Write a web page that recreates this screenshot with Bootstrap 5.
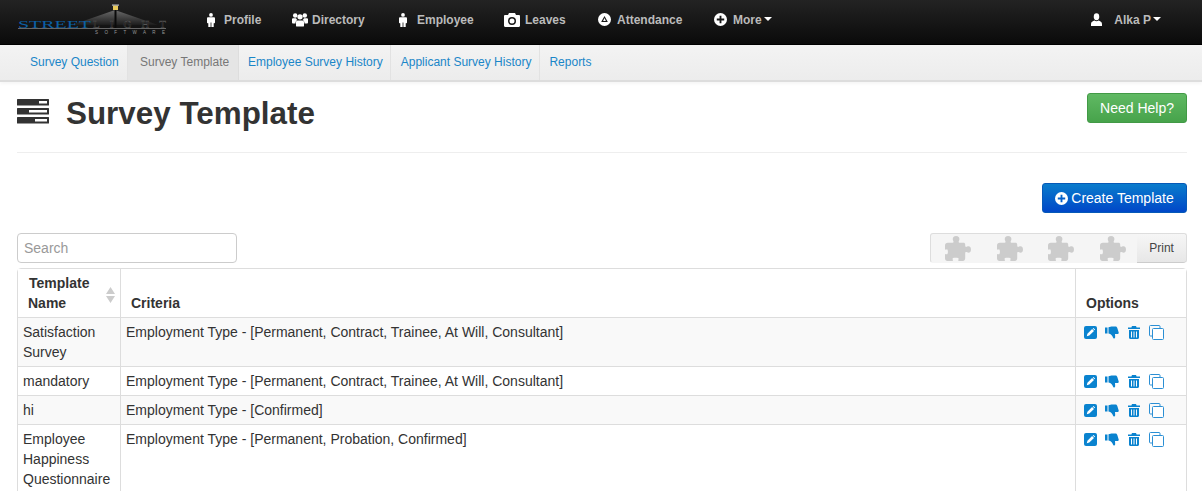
<!DOCTYPE html>
<html lang="en">
<head>
<meta charset="utf-8">
<title>Survey Template</title>
<link href="https://cdn.jsdelivr.net/npm/bootstrap@5.3.0/dist/css/bootstrap.min.css" rel="stylesheet">
<style>
html,body{height:491px;overflow:hidden}
body{font-family:"Liberation Sans",Arial,sans-serif;font-size:14px;line-height:20px;color:#333;background:#fff}
.topbar{height:45px;background:linear-gradient(#232323,#0a0a0a);padding:0;flex-wrap:nowrap;border-bottom:1px solid #000}
.brandbox{width:180px;height:44px;flex:none;display:block}
.mainnav .nav-link{color:#bbb;font-weight:700;font-size:12px;padding:0;height:39px;display:flex;align-items:center;white-space:nowrap}
.navitem{display:flex}
.navicon{fill:#fff;flex:none;display:block}
.w-profile{margin-left:26px;width:86px}
.w-directory{width:106px}
.w-employee{width:106px}
.w-leaves{width:94px}
.w-attendance{width:116px}
.w-more{width:100px}
.gap-man-a{margin-right:8px}
.gap-man-b{margin-right:9px}
.gap-group{margin-right:4px}
.gap-cam{margin-right:5px}
.gap-circle{margin-right:6px}
.gap-user{margin-right:12px}
.caret-down{display:inline-block;border-top:4px solid #fff;border-left:4px solid transparent;border-right:4px solid transparent;margin-left:2px;margin-top:-2px}
.usernav{margin-left:auto;margin-right:41px;color:#bbb;font-weight:700;font-size:12px;height:39px;display:flex;align-items:center}
.subbar{height:37px;background:linear-gradient(#f3f3f3,#ececec);border-bottom:2px solid #ddd;display:flex;box-shadow:0 2px 3px rgba(0,0,0,.04)}
.subbar a{font-size:12px;color:#1a86c8;text-decoration:none;display:flex;align-items:center;height:35px;padding-bottom:2px;white-space:nowrap}
.subbar a.tab-question{width:127px;padding-left:30px}
.subbar a.tab-template{width:112px;padding-left:12px;background:#e5e5e5;color:#777;border-left:1px solid #e2e2e2;border-right:1px solid #ddd}
.subbar a.tab-employee{padding-left:9px;padding-right:7px;border-right:1px solid #e2e2e2}
.subbar a.tab-applicant{padding-left:10px;padding-right:8px;border-right:1px solid #e2e2e2}
.subbar a.tab-reports{padding-left:9px}
.pagewrap{padding:0 15px 0 17px}
.headrow{height:71px;border-bottom:1px solid #eee}
.headtitle{display:flex;align-items:center;padding-top:20px;height:44px;margin:0}
.headtitle svg{margin-bottom:5px}
.headtitle h1{font-size:31.4px;line-height:40px;font-weight:700;margin:0 0 0 17px;color:#333}
.helpbtn{width:100px;height:30px;font-size:14px;line-height:28px;padding:0;color:#fff;background:linear-gradient(#60b963,#47a34b);border:1px solid #429a46;border-radius:3px;margin-top:11px}
.createrow{margin-top:30px;height:30px}
.createbtn{width:145px;height:30px;padding:0;font-size:14px;line-height:28px;color:#fff;background:linear-gradient(#0a7ccc,#0047c8);border:1px solid #0659b8;border-radius:3px;display:flex;align-items:center;justify-content:center;gap:3px}
.toolrow{margin-top:20px;height:30px}
.searchbox{width:220px;height:30px;font-size:14px;padding:4px 6px;border:1px solid #ccc;border-radius:4px;color:#555;line-height:20px}
.searchbox::placeholder{color:#999;opacity:1}
.toolgroup{width:257px;height:30px;display:flex;border:1px solid #ddd;border-radius:3px;background:#f5f5f5;border-bottom-color:#f5f5f5}
.puzzles{width:207px;display:flex;padding-left:14px;gap:25.6px;align-items:center}
.printbtn{width:49px;height:29px;font-size:12px;color:#444;background:linear-gradient(#f6f6f6,#e7e7e7);border:0;border-bottom:1px solid #ccc;padding:0;border-radius:0 3px 3px 0}
.gridwrap{margin-top:5px;width:1170px;border:1px solid #ddd;border-radius:4px 4px 0 0}
.gridtable{table-layout:fixed;width:100%;margin:0;font-size:14px;color:#333;--bs-table-border-color:#ddd;border-collapse:separate;border-spacing:0}
.gridtable th,.gridtable td{border:0;border-right:1px solid #ddd;border-bottom:1px solid #ddd;line-height:20px;box-shadow:none}
.gridtable th:last-child,.gridtable td:last-child{border-right:0}
.gridtable th{font-weight:700;padding:4px 10px 4px;vertical-align:bottom;height:49px;background:#fff}
.gridtable td{padding:4px 5px;vertical-align:top;color:#333}
.gridtable tbody tr:nth-child(odd) td{background:#f9f9f9}
.gridtable tbody tr:nth-child(even) td{background:#fff}
.sorthead{position:relative;padding-right:14px;display:block;margin-left:1px}
.sorthead-name{margin-left:-1px}
.sortmark{position:absolute;right:-5px;top:14px}
.opts{display:flex;align-items:center;padding-left:3px;height:20px}
.opts svg{display:block;flex:none}
.opt-down{margin-left:8px}
.opt-bin{margin-left:9px}
.opt-copy{margin-left:9px}
</style>
</head>
<body>
<svg width="0" height="0" class="position-absolute">
<symbol id="man" viewBox="0 0 10 14"><circle cx="5" cy="1.900" r="1.900"/><path d="M2.200 4.300h5.600c.8 0 1.200.5 1.200 1.200v3.900c0 .5-.3.800-.7.800h-.6V14H5.400V9.500h-.8V14H2.300V10.200h-.6c-.4 0-.7-.3-.7-.8V5.500c0-.7.400-1.200 1.200-1.200z"/></symbol>
<symbol id="group" viewBox="0 0 18 16"><circle cx="3.600" cy="3.500" r="2.500"/><circle cx="14.400" cy="3.500" r="2.500"/><circle cx="9" cy="5" r="3"/><path d="M0 7.500c0-.8.700-1 1.500-1h3c.4 1 1 1.600 1.600 2.200C4.700 9.300 4 10.400 4 12v.5H1c-.6 0-1-.4-1-1zM18 7.500c0-.8-.7-1-1.500-1h-3c-.4 1-1 1.600-1.600 2.200 1.400.6 2.100 1.700 2.100 3.300v.5h3c.6 0 1-.4 1-1zM6.500 9h5c1.100 0 2 .8 2 2v4c0 .6-.4 1-1 1h-7c-.6 0-1-.4-1-1v-4c0-1.200.9-2 2-2z"/></symbol>
<symbol id="cam" viewBox="0 0 16 14"><path fill-rule="evenodd" d="M1.200 2H4l1-2h6l1 2h2.800c.7 0 1.200.5 1.200 1.200v9.600c0 .7-.5 1.200-1.200 1.200H1.200C.5 14 0 13.500 0 12.800V3.200C0 2.500.5 2 1.200 2zM8 4a4 4 0 1 0 0 8 4 4 0 0 0 0-8zm0 1.500a2.500 2.500 0 1 1 0 5 2.500 2.500 0 0 1 0-5z"/></symbol>
<symbol id="att" viewBox="0 0 14 14"><path fill-rule="evenodd" d="M7 0a7 7 0 1 1 0 14A7 7 0 0 1 7 0zm0 3.200L3.400 9.800h7.200zm0 2.300l1.500 3H5.500z"/></symbol>
<symbol id="plus" viewBox="0 0 14 14"><path fill-rule="evenodd" d="M7 0a7 7 0 1 1 0 14A7 7 0 0 1 7 0zM6 3v3H3v2h3v3h2V8h3V6H8V3z"/></symbol>
<symbol id="user" viewBox="0 0 12 14"><ellipse cx="6" cy="4" rx="3" ry="3.700"/><path d="M0 14v-2.200C0 9.800 2 9 3.800 8.200c.6.500 1.300.8 2.200.8s1.600-.3 2.200-.8C10 9 12 9.800 12 11.800V14z"/></symbol>
<symbol id="puz" viewBox="0 0 27 26"><path d="M3 7H8C9 7 9 6 8.500 5 7.500 3 8 0 11.500 0S15.500 3 14.500 5C14 6 14 7 15 7H19C20.300 7 21 7.700 21 9V10.500C21 11.500 22 11.500 23 11 25 10 27 11 27 14S25 18 23 17C22 16.500 21 16.500 21 17.500V23C21 25 20 26 18.500 26H14.500C13.500 26 13.500 25 14 24.500 14.800 23.500 14 22.500 11 22.500S7.200 23.500 8 24.500C8.500 25 8.500 26 7.500 26H2.500C1 26 0 25 0 23.500V19.500C0 18.500 1 18.500 1.500 19 2.500 19.500 3 18.500 3 16.500S2.500 13.500 1.500 14C1 14.500 0 14.500 0 13.500V10C0 8 1 7 3 7z"/></symbol>
<symbol id="edit" viewBox="0 0 13 13"><rect width="13" height="13" rx="2" fill="#0a83cf"/><path d="M2.800 10.200l.6-2.500 4.700-4.700 1.900 1.900-4.700 4.700zM8.700 2.500l.7-.6 1.700 1.700-.7.700z" fill="#fff"/></symbol>
<symbol id="down" viewBox="0 0 14 13"><path d="M0 1.500h2.500v6H0zM3.500 1.300C5 .7 6 .5 7.500.5h3c1 0 1.500.6 1.800 1.500l1.400 4.500c.2.900-.3 1.500-1.200 1.500H10l.2 3c0 .9-.5 1.500-1.200 1.500-.5 0-.8-.3-1-.9C7.400 9.800 6 8 3.500 7.500z" fill="#0a83cf"/></symbol>
<symbol id="bin" viewBox="0 0 12 13"><path fill-rule="evenodd" d="M4 0h4l.6 1.500H12V3H0V1.500h3.400zM1 4h10v7.500c0 .9-.6 1.500-1.500 1.500h-7C1.600 13 1 12.400 1 11.500zm2 1.500v6h1v-6zm2.500 0v6h1v-6zm2.500 0v6h1v-6z" fill="#0a83cf"/></symbol>
<symbol id="copy" viewBox="0 0 15 15"><rect x=".5" y=".5" width="10.500" height="10.500" rx="1" fill="none" stroke="#2b8fd4"/><rect x="3.500" y="3.500" width="11" height="11" rx="1" fill="#fff" stroke="#2b8fd4"/></symbol>
</svg>

<nav class="navbar topbar d-flex align-items-start">
  <svg class="brandbox" viewBox="0 0 180 44" role="img" aria-label="StreetLight Software">
    <defs>
      <linearGradient id="beam" x1="0" y1="0" x2="0" y2="1"><stop offset="0" stop-color="#6a6a6a"/><stop offset="1" stop-color="#1c1c1c"/></linearGradient>
    </defs>
    <path d="M115 10L72 25h86z" fill="url(#beam)"/>
    <rect x="114.500" y="8" width="2" height="20" fill="#0a0a0a"/>
    <rect x="113" y="5.500" width="5" height="4.500" fill="#e8c95a"/>
    <rect x="112" y="4.500" width="7" height="1.200" fill="#bbb"/>
    <text x="18" y="28" font-family="Liberation Serif,serif" font-size="11" textLength="73" lengthAdjust="spacingAndGlyphs" fill="#0b5fa5">STREET</text>
    <text x="93" y="28" font-family="Liberation Serif,serif" font-size="11" textLength="73" lengthAdjust="spacing" fill="#0c0c0c" stroke="#555" stroke-width=".4">LIGHT</text>
    <rect x="18" y="28" width="148" height="1" fill="#666"/>
    <text x="95" y="33.500" font-family="Liberation Sans,sans-serif" font-size="4.500" textLength="70" lengthAdjust="spacing" fill="#999">SOFTWARE</text>
  </svg>
  <div class="mainnav d-flex">
    <div class="navitem w-profile"><a class="nav-link" href="#"><svg class="navicon gap-man-a" width="10" height="14"><use href="#man"/></svg>Profile</a></div>
    <div class="navitem w-directory"><a class="nav-link" href="#"><svg class="navicon gap-group" width="16" height="15"><use href="#group"/></svg>Directory</a></div>
    <div class="navitem w-employee"><a class="nav-link" href="#"><svg class="navicon gap-man-b" width="10" height="14"><use href="#man"/></svg>Employee</a></div>
    <div class="navitem w-leaves"><a class="nav-link" href="#"><svg class="navicon gap-cam" width="16" height="14"><use href="#cam"/></svg>Leaves</a></div>
    <div class="navitem w-attendance"><a class="nav-link" href="#"><svg class="navicon gap-circle" width="13" height="13"><use href="#att"/></svg>Attendance</a></div>
    <div class="navitem w-more"><a class="nav-link" href="#"><svg class="navicon gap-circle" width="13" height="13"><use href="#plus"/></svg>More<span class="caret-down"></span></a></div>
  </div>
  <div class="usernav"><svg class="navicon gap-user" width="11" height="13"><use href="#user"/></svg>Alka P<span class="caret-down"></span></div>
</nav>

<div class="subbar">
  <a class="tab-question" href="#">Survey Question</a>
  <a class="tab-template" href="#">Survey Template</a>
  <a class="tab-employee" href="#">Employee Survey History</a>
  <a class="tab-applicant" href="#">Applicant Survey History</a>
  <a class="tab-reports" href="#">Reports</a>
</div>

<div class="pagewrap">
  <div class="headrow d-flex justify-content-between align-items-start">
    <div class="headtitle">
      <svg width="32" height="25" viewBox="0 0 32 25" fill="#333"><rect width="32" height="6.500" rx=".5"/><rect y="9" width="32" height="6.500" rx=".5"/><rect y="18" width="32" height="6.500" rx=".5"/><rect x="22" y="2" width="8" height="2.500" fill="#fff"/><rect x="12" y="11" width="18" height="2.500" fill="#fff"/><rect x="18" y="20" width="12" height="2.500" fill="#fff"/></svg>
      <h1>Survey Template</h1>
    </div>
    <button class="btn helpbtn" type="button">Need Help?</button>
  </div>
  <div class="createrow d-flex justify-content-end">
    <button class="btn createbtn" type="button"><svg width="13" height="13" fill="#fff"><use href="#plus"/></svg>Create Template</button>
  </div>
  <div class="toolrow d-flex justify-content-between">
    <input class="form-control searchbox" type="text" placeholder="Search">
    <div class="toolgroup">
      <div class="puzzles">
        <svg width="26" height="25" fill="#ccc"><use href="#puz"/></svg>
        <svg width="26" height="25" fill="#ccc"><use href="#puz"/></svg>
        <svg width="26" height="25" fill="#ccc"><use href="#puz"/></svg>
        <svg width="26" height="25" fill="#ccc"><use href="#puz"/></svg>
      </div>
      <button class="printbtn" type="button">Print</button>
    </div>
  </div>
  <div class="gridwrap">
    <table class="table gridtable">
      <colgroup><col style="width:103px"><col style="width:955px"><col style="width:110px"></colgroup>
      <thead>
        <tr>
          <th><span class="sorthead">Template<br><span class="sorthead-name">Name</span>
            <svg class="sortmark" width="9" height="16" viewBox="0 0 9 16" fill="#ccc"><path d="M4.500 0L9 7H0zM4.500 16L0 9h9z"/></svg></span></th>
          <th>Criteria</th>
          <th>Options</th>
        </tr>
      </thead>
      <tbody>
        <tr><td>Satisfaction Survey</td><td>Employment Type - [Permanent, Contract, Trainee, At Will, Consultant]</td><td><div class="opts"><svg width="13" height="13"><use href="#edit"/></svg><svg class="opt-down" width="14" height="13"><use href="#down"/></svg><svg class="opt-bin" width="12" height="13"><use href="#bin"/></svg><svg class="opt-copy" width="15" height="15"><use href="#copy"/></svg></div></td></tr>
        <tr><td>mandatory</td><td>Employment Type - [Permanent, Contract, Trainee, At Will, Consultant]</td><td><div class="opts"><svg width="13" height="13"><use href="#edit"/></svg><svg class="opt-down" width="14" height="13"><use href="#down"/></svg><svg class="opt-bin" width="12" height="13"><use href="#bin"/></svg><svg class="opt-copy" width="15" height="15"><use href="#copy"/></svg></div></td></tr>
        <tr><td>hi</td><td>Employment Type - [Confirmed]</td><td><div class="opts"><svg width="13" height="13"><use href="#edit"/></svg><svg class="opt-down" width="14" height="13"><use href="#down"/></svg><svg class="opt-bin" width="12" height="13"><use href="#bin"/></svg><svg class="opt-copy" width="15" height="15"><use href="#copy"/></svg></div></td></tr>
        <tr><td>Employee Happiness Questionnaire</td><td>Employment Type - [Permanent, Probation, Confirmed]</td><td><div class="opts"><svg width="13" height="13"><use href="#edit"/></svg><svg class="opt-down" width="14" height="13"><use href="#down"/></svg><svg class="opt-bin" width="12" height="13"><use href="#bin"/></svg><svg class="opt-copy" width="15" height="15"><use href="#copy"/></svg></div></td></tr>
      </tbody>
    </table>
  </div>
</div>
<script src="https://cdn.jsdelivr.net/npm/bootstrap@5.3.0/dist/js/bootstrap.bundle.min.js"></script>
</body>
</html>
